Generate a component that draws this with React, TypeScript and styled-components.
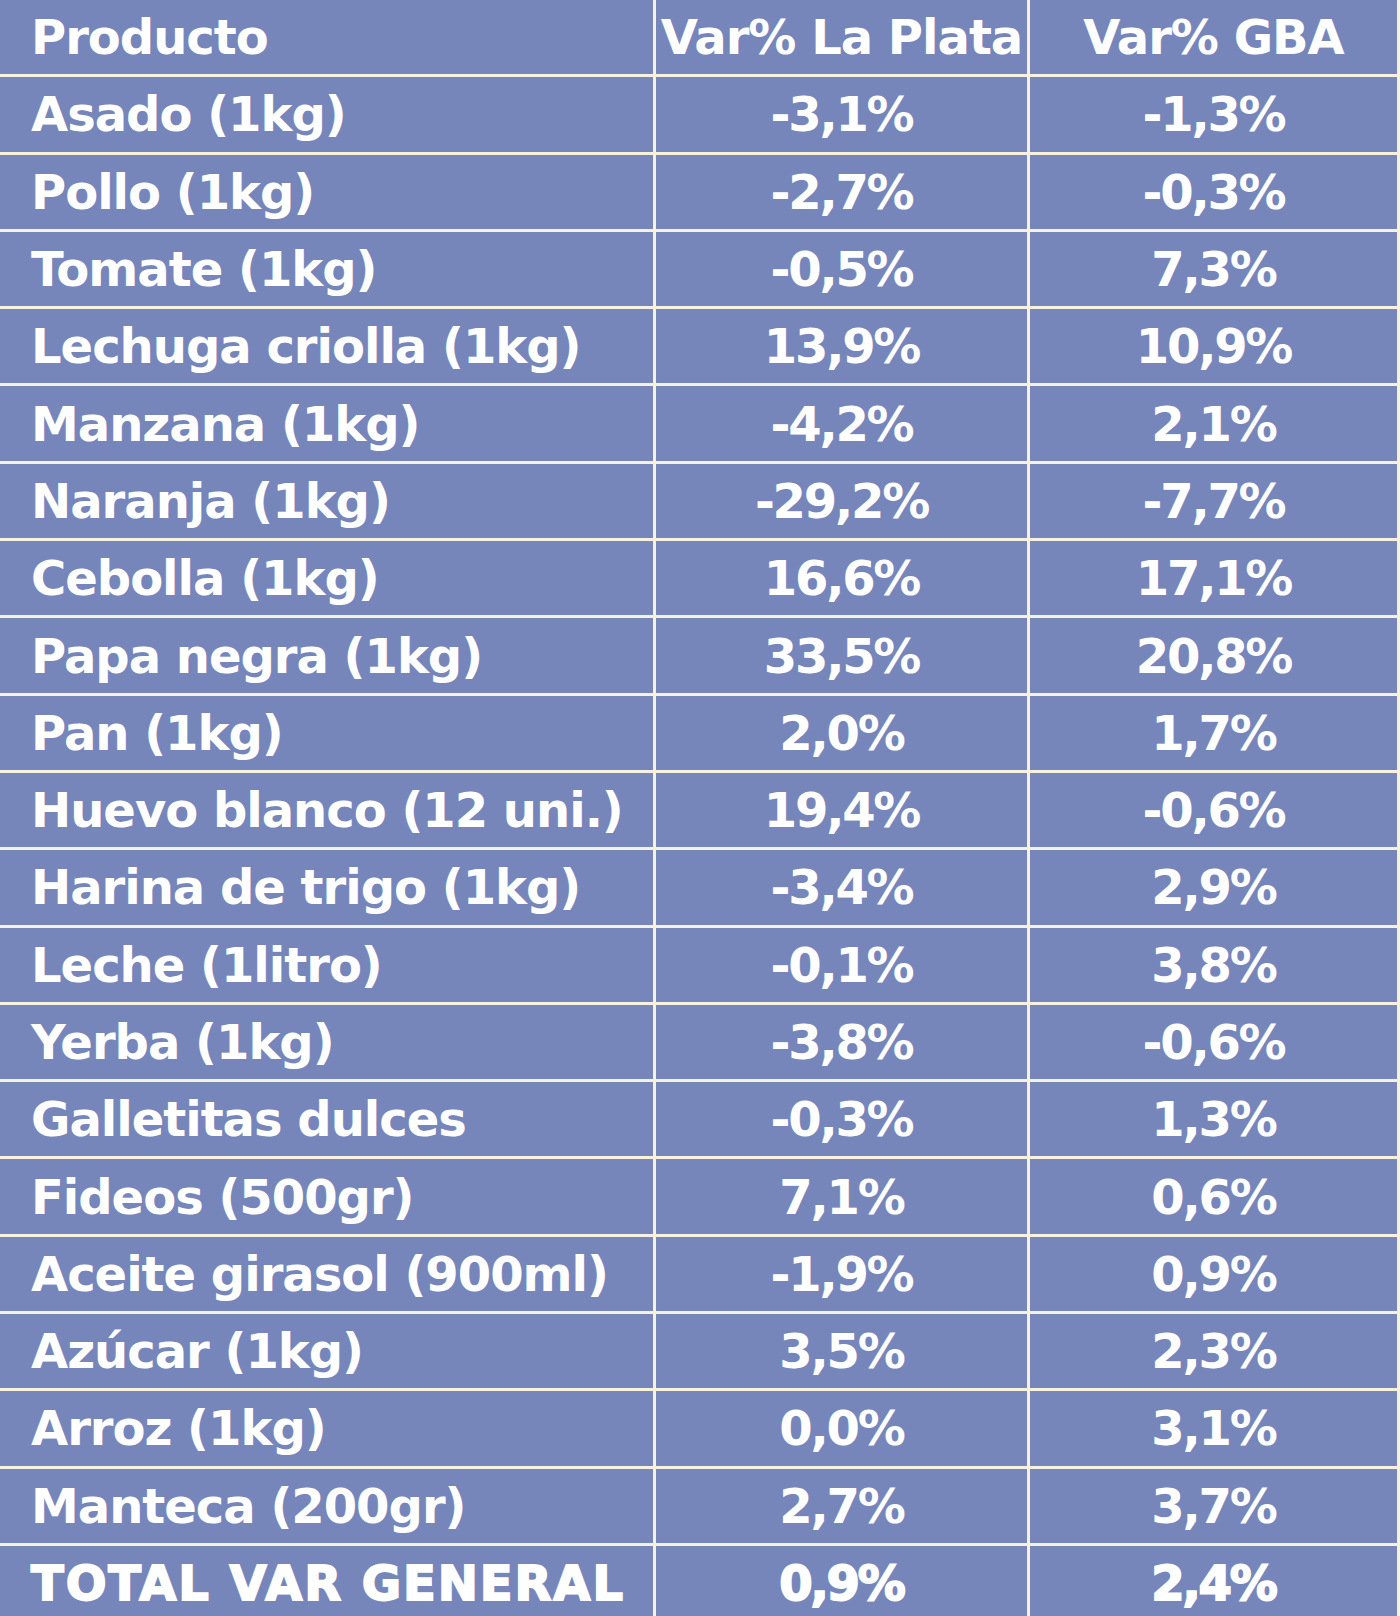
import React from "react";
import styled, { createGlobalStyle } from "styled-components";

const GlobalStyle = createGlobalStyle`
  html, body {
    margin: 0;
    padding: 0;
    background: #f7f2de;
  }
`;

const Table = styled.div`
  display: grid;
  grid-template-columns: 653px 371px 367px;
  grid-auto-rows: 74.3px;
  gap: 3px;
  width: 1397px;
  height: 1616px;
  overflow: hidden;
  background: #f7f2de;
  font-family: "DejaVu Sans", "Noto Sans", sans-serif;
  color: #ffffff;
`;

const NameCell = styled.div<{ $heavy?: boolean }>`
  display: flex;
  align-items: center;
  padding-left: 31px;
  background: #7686bb;
  font-size: 48px;
  font-weight: 700;
  letter-spacing: ${(p) => (p.$heavy ? "1.9px" : "-1px")};
  white-space: nowrap;
  -webkit-text-stroke: ${(p) => (p.$heavy ? "1.8px #ffffff" : "0")};
`;

const ValueCell = styled.div<{ $heavy?: boolean; $header?: boolean }>`
  display: flex;
  align-items: center;
  justify-content: center;
  background: #7686bb;
  font-size: 48px;
  font-weight: 700;
  letter-spacing: ${(p) => (p.$header ? "-1px" : "-2.2px")};
  white-space: nowrap;
  -webkit-text-stroke: ${(p) => (p.$heavy ? "1.8px #ffffff" : "0")};
`;

const rows: [string, string, string][] = [
  ["Asado (1kg)", "-3,1%", "-1,3%"],
  ["Pollo (1kg)", "-2,7%", "-0,3%"],
  ["Tomate (1kg)", "-0,5%", "7,3%"],
  ["Lechuga criolla (1kg)", "13,9%", "10,9%"],
  ["Manzana (1kg)", "-4,2%", "2,1%"],
  ["Naranja (1kg)", "-29,2%", "-7,7%"],
  ["Cebolla (1kg)", "16,6%", "17,1%"],
  ["Papa negra (1kg)", "33,5%", "20,8%"],
  ["Pan (1kg)", "2,0%", "1,7%"],
  ["Huevo blanco (12 uni.)", "19,4%", "-0,6%"],
  ["Harina de trigo (1kg)", "-3,4%", "2,9%"],
  ["Leche (1litro)", "-0,1%", "3,8%"],
  ["Yerba (1kg)", "-3,8%", "-0,6%"],
  ["Galletitas dulces", "-0,3%", "1,3%"],
  ["Fideos (500gr)", "7,1%", "0,6%"],
  ["Aceite girasol (900ml)", "-1,9%", "0,9%"],
  ["Azúcar (1kg)", "3,5%", "2,3%"],
  ["Arroz (1kg)", "0,0%", "3,1%"],
  ["Manteca (200gr)", "2,7%", "3,7%"],
];

const App: React.FC = () => {
  return (
    <>
      <GlobalStyle />
      <Table>
        <NameCell>Producto</NameCell>
        <ValueCell $header>Var% La Plata</ValueCell>
        <ValueCell $header>Var% GBA</ValueCell>

        {rows.map(([name, laPlata, gba]) => (
          <React.Fragment key={name}>
            <NameCell>{name}</NameCell>
            <ValueCell>{laPlata}</ValueCell>
            <ValueCell>{gba}</ValueCell>
          </React.Fragment>
        ))}

        <NameCell $heavy>TOTAL VAR GENERAL</NameCell>
        <ValueCell $heavy>0,9%</ValueCell>
        <ValueCell $heavy>2,4%</ValueCell>
      </Table>
    </>
  );
};

export default App;
